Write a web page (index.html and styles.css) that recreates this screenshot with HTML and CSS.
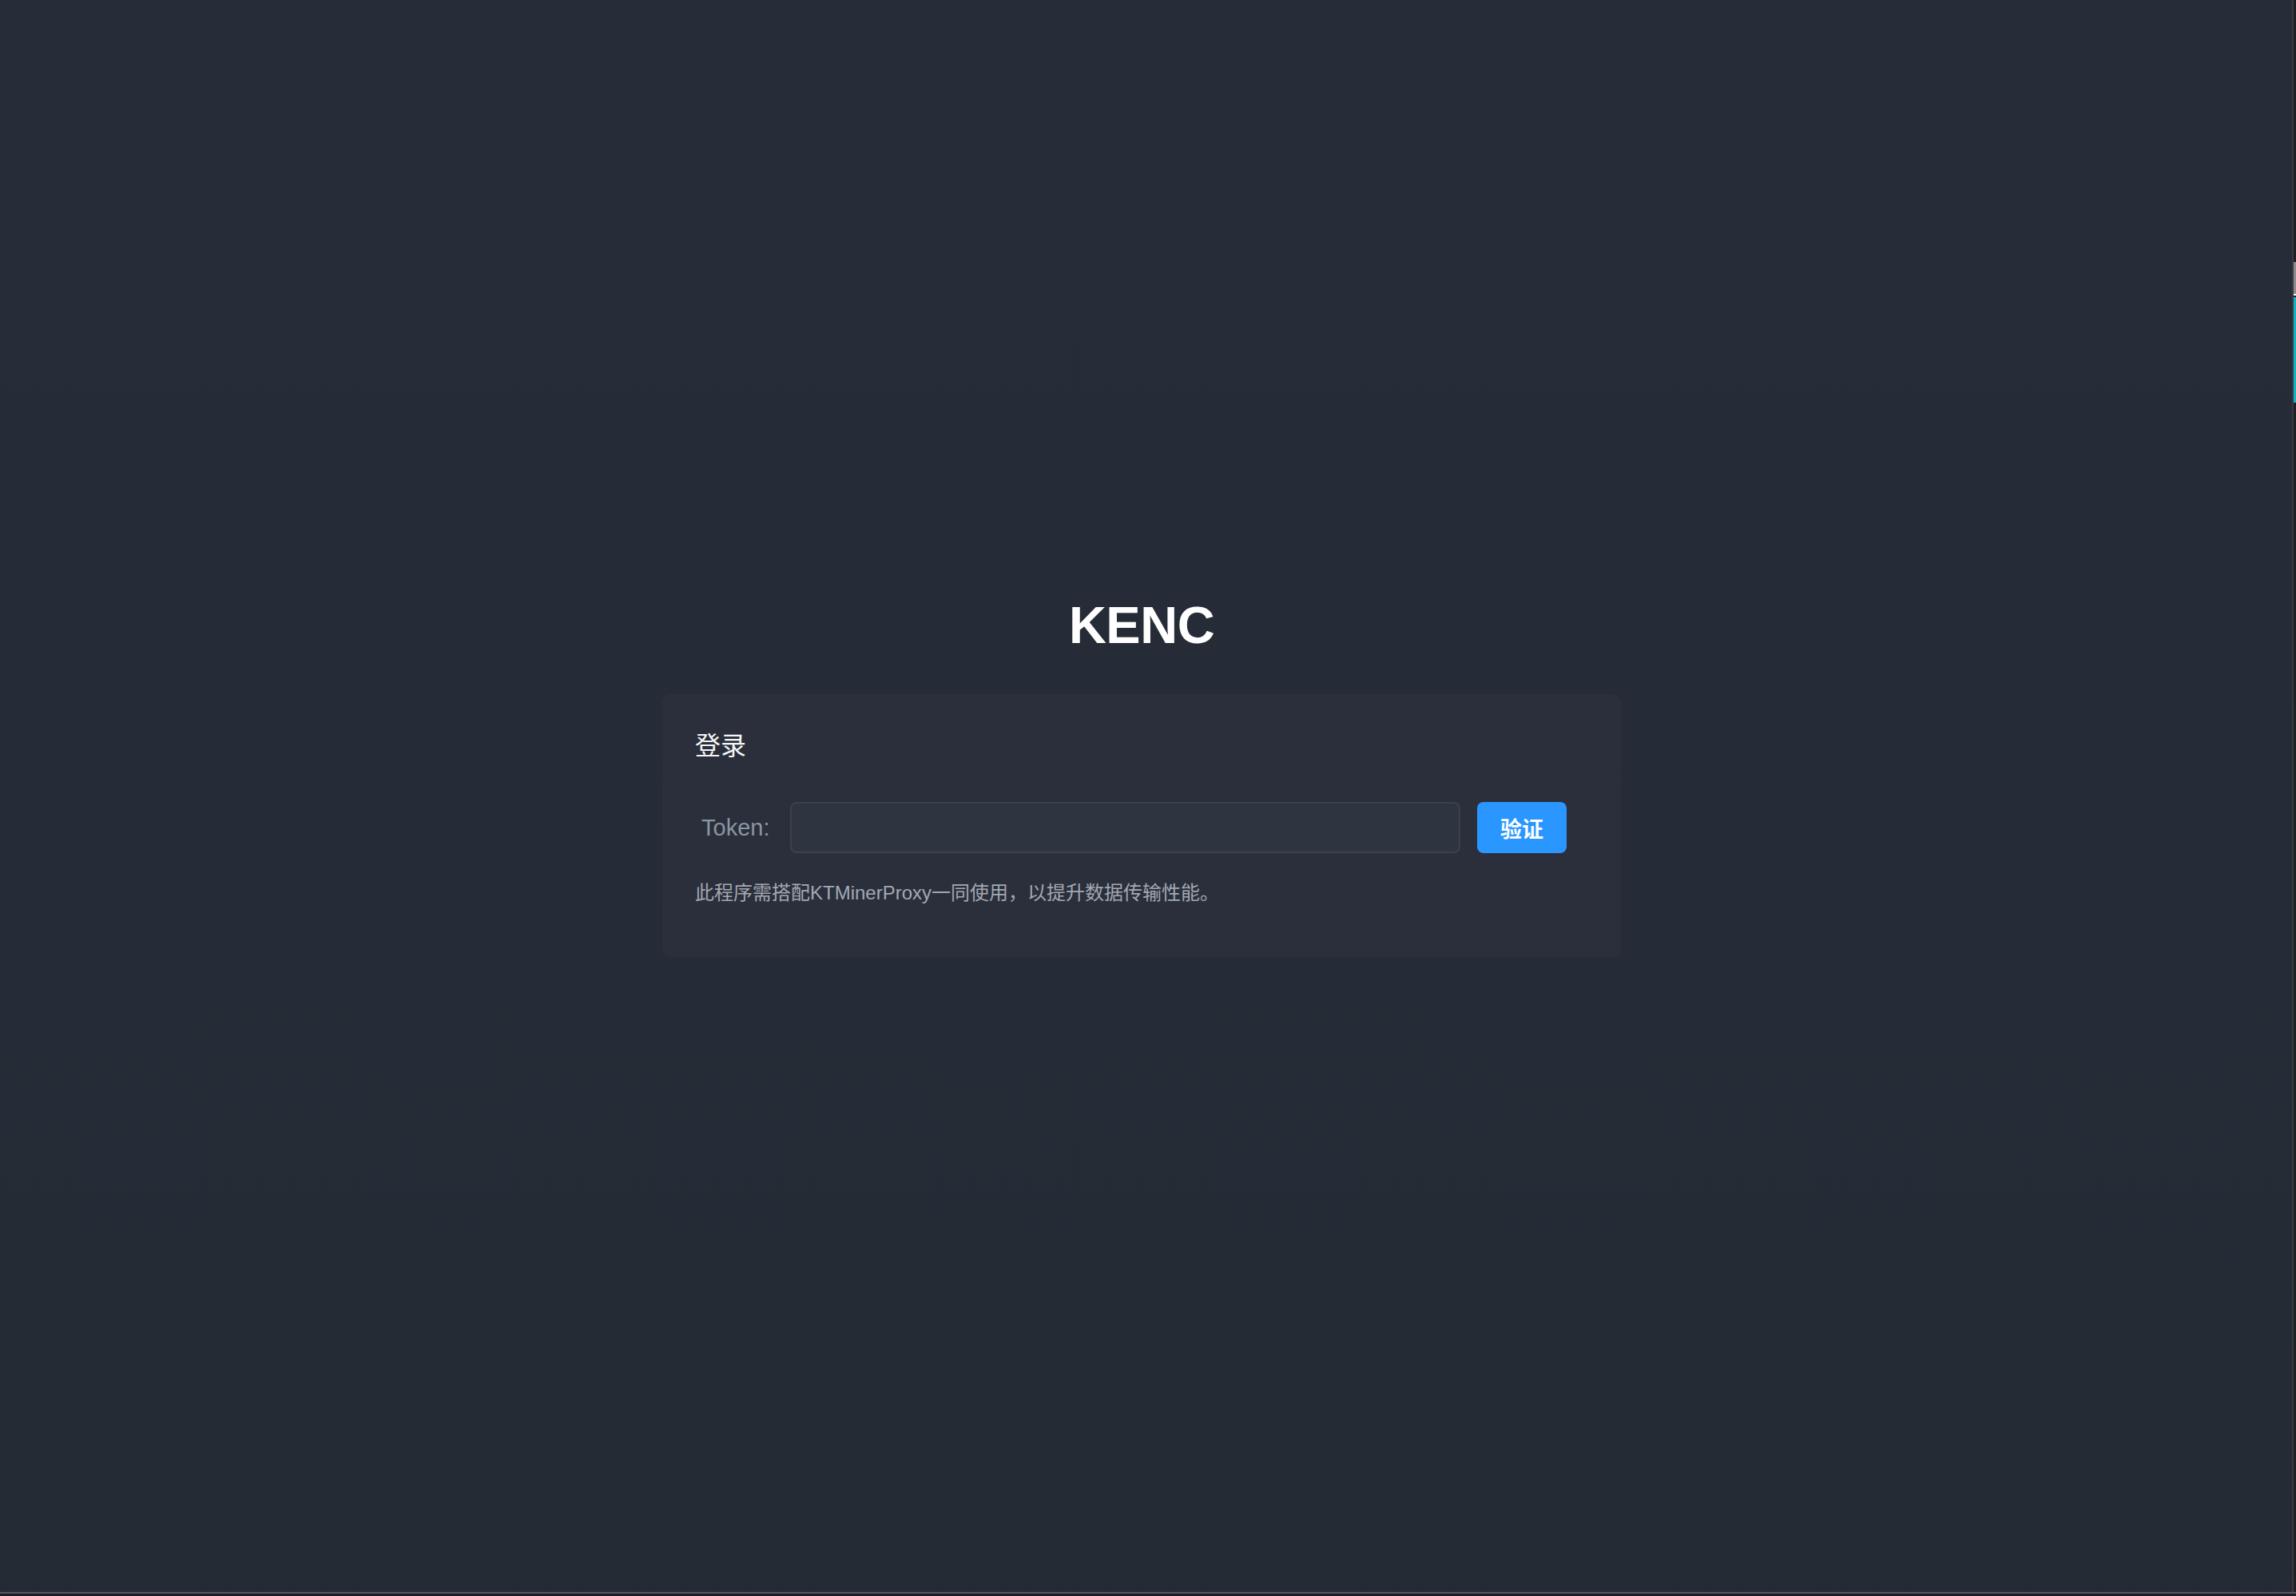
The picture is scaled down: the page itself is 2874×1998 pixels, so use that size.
FILE: index.html
```html
<!DOCTYPE html>
<html lang="zh-CN">
<head>
<meta charset="utf-8">
<title>KENC</title>
<link rel="stylesheet" href="styles.css">
</head>
<body>
<div class="page">
  <main class="login">
    <h1 class="brand">KENC</h1>
    <section class="card">
      <h2 class="card-title">登录</h2>
      <form class="form-row" onsubmit="return false">
        <label class="label" for="token">Token:</label>
        <input class="input" id="token" type="text">
        <button class="btn" type="submit">验证</button>
      </form>
      <p class="note">此程序需搭配KTMinerProxy一同使用，以提升数据传输性能。</p>
    </section>
  </main>
</div>
<div class="edge-right">
  <div class="edge-thumb"></div>
  <div class="edge-mark"></div>
  <div class="edge-cyan"></div>
</div>
<div class="edge-bottom"></div>
</body>
</html>
```

FILE: styles.css
```css
html, body {
  margin: 0;
  padding: 0;
  height: 100%;
  overflow: hidden;
  background: #262c37;
}

body {
  font-family: "Liberation Sans", "Noto Sans CJK SC", sans-serif;
  color: #ffffff;
}

.page {
  height: 100vh;
  padding-right: 16px;
  box-sizing: border-box;
  background: linear-gradient(#272d38, #252b35);
}

.login {
  display: flex;
  flex-direction: column;
  align-items: center;
  padding-top: 744px;
}

.brand {
  margin: 0;
  font-size: 65px;
  line-height: 77px;
  font-weight: 700;
  letter-spacing: -0.5px;
  color: #ffffff;
}

.card {
  width: 1200px;
  box-sizing: border-box;
  margin-top: 48px;
  padding: 40px 40px 62px 41px;
  background: #2a2f3b;
  border-radius: 10px;
}

.card-title {
  margin: 0;
  font-family: "Noto Sans CJK SC", sans-serif;
  font-size: 32px;
  line-height: 45px;
  font-weight: 400;
  color: #f4f5f7;
}

.form-row {
  display: flex;
  align-items: center;
  margin: 50px 0 0;
}

.label {
  padding: 0 25px 0 8px;
  width: 86px;
  font-size: 29px;
  line-height: 40px;
  color: #8a95a2;
  white-space: nowrap;
}

.input {
  width: 839px;
  height: 64px;
  box-sizing: border-box;
  margin: 0;
  padding: 0 16px;
  background: #2f3441;
  border: 2px solid #3a4050;
  border-radius: 8px;
  color: #ffffff;
  font-size: 26px;
  outline: none;
}

.btn {
  margin-left: 21px;
  width: 112px;
  height: 64px;
  border: 0;
  border-radius: 8px;
  background: #2a96ff;
  color: #ffffff;
  font-family: "Noto Sans CJK SC", sans-serif;
  font-size: 27px;
  font-weight: 700;
  padding: 0;
}

.note {
  margin: 32px 0 0;
  font-size: 24px;
  line-height: 36px;
  color: #a2a8b2;
}

.edge-right {
  position: fixed;
  top: 0;
  right: 0;
  bottom: 5px;
  width: 5px;
  background: #1f2024;
  border-left: 2px solid #3a3b3f;
  box-sizing: border-box;
}

.edge-thumb {
  position: absolute;
  top: 328px;
  left: 0;
  right: 0;
  height: 40px;
  background: #8c8c8c;
}

.edge-mark {
  position: absolute;
  top: 368px;
  left: 0;
  right: 0;
  height: 2px;
  background: #ffffff;
}

.edge-cyan {
  position: absolute;
  top: 372px;
  left: 0;
  right: 0;
  height: 132px;
  background: #17b3c1;
}

.edge-bottom {
  position: fixed;
  left: 0;
  right: 0;
  bottom: 0;
  height: 5px;
  background: #1c1d24;
  border-top: 2px solid #555a62;
  box-sizing: border-box;
}
```
